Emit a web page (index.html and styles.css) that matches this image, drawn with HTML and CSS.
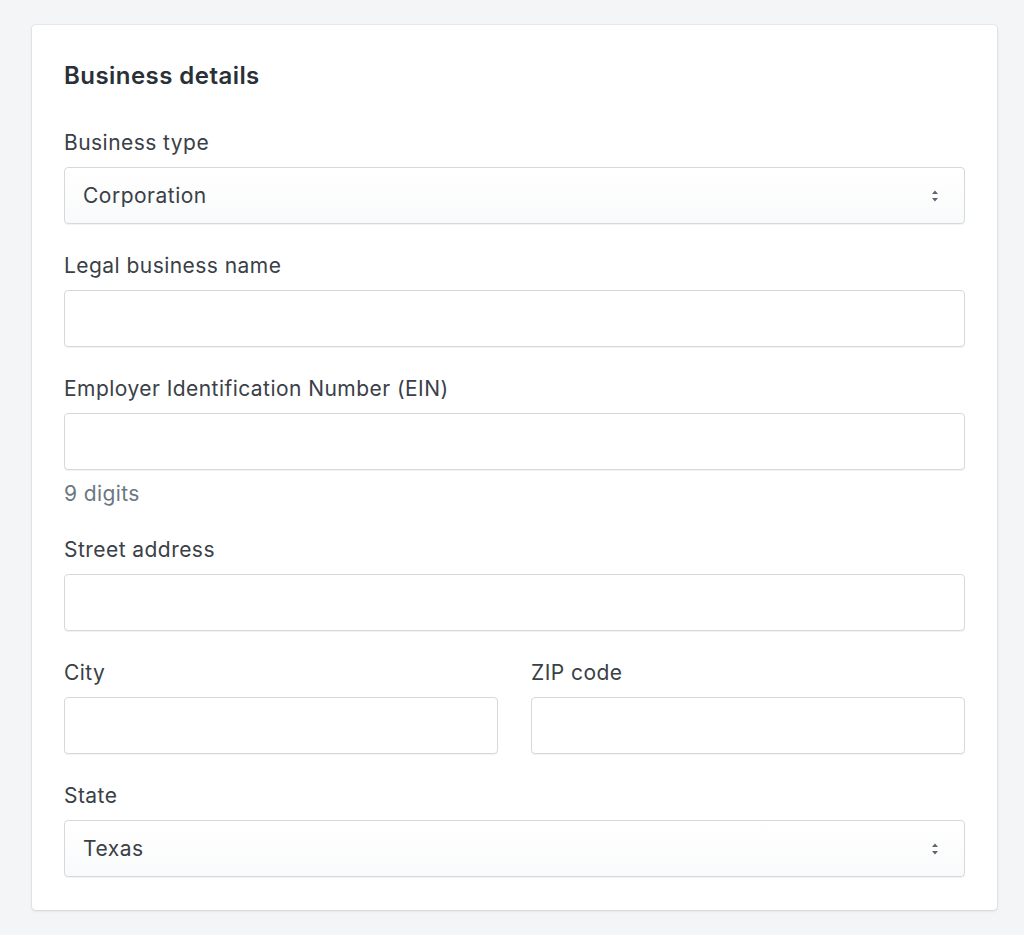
FILE: index.html
```html
<!DOCTYPE html>
<html lang="en">
<head>
    <meta charset="UTF-8">
    <meta name="viewport" content="width=device-width, initial-scale=1.0">
    <title>Business details</title>
    <link rel="stylesheet" href="styles.css">
</head>
<body>
    <div class="card">
        <h2 class="card-title">Business details</h2>

        <div class="field">
            <label class="label">Business type</label>
            <div class="select">
                <span>Corporation</span>
                <svg class="arrows" width="10" height="14" viewBox="0 0 10 14">
                    <path d="M5 1.5 L8 5 H2 Z" fill="#5c6670"/>
                    <path d="M5 12.5 L8 9 H2 Z" fill="#5c6670"/>
                </svg>
            </div>
        </div>

        <div class="field">
            <label class="label">Legal business name</label>
            <div class="input"></div>
        </div>

        <div class="field">
            <label class="label">Employer Identification Number (EIN)</label>
            <div class="input"></div>
            <div class="help">9 digits</div>
        </div>

        <div class="field">
            <label class="label">Street address</label>
            <div class="input"></div>
        </div>

        <div class="row">
            <div class="field">
                <label class="label">City</label>
                <div class="input"></div>
            </div>
            <div class="field">
                <label class="label">ZIP code</label>
                <div class="input"></div>
            </div>
        </div>

        <div class="field">
            <label class="label">State</label>
            <div class="select">
                <span>Texas</span>
                <svg class="arrows" width="10" height="14" viewBox="0 0 10 14">
                    <path d="M5 1.5 L8 5 H2 Z" fill="#5c6670"/>
                    <path d="M5 12.5 L8 9 H2 Z" fill="#5c6670"/>
                </svg>
            </div>
        </div>
    </div>
</body>
</html>
```

FILE: styles.css
```css
body {
    font-family: Inter, "Noto Sans", sans-serif;
    background-color: #f4f5f7;
    color: #212b36;
    margin: 0;
    padding: 25px 27px 25px 32px;
}

.card {
    background-color: #fff;
    border-radius: 4px;
    box-shadow: 0 0 0 1px rgba(63, 63, 68, 0.05), 0 1px 3px rgba(63, 63, 68, 0.15);
    padding: 36px 32px 33px 32px;
}

.card-title {
    margin: 0 0 38px 0;
    font-size: 24px;
    line-height: 30px;
    font-weight: 600;
    letter-spacing: 0.45px;
    color: #2a3038;
}

.field {
    margin-top: 28px;
}

.label {
    display: block;
    font-size: 21px;
    line-height: 28px;
    letter-spacing: 0.45px;
    color: #3a4047;
    margin-bottom: 10px;
}

.input,
.select {
    box-sizing: border-box;
    height: 57px;
    border: 1px solid #d5d9de;
    border-radius: 4px;
    background-color: #fff;
    box-shadow: 0 1px 0 rgba(22, 29, 37, 0.05);
}

.select {
    display: flex;
    align-items: center;
    justify-content: space-between;
    padding: 0 24px 0 18px;
    background: linear-gradient(to bottom, #fff, #f9fafb);
    font-size: 21px;
    letter-spacing: 0.5px;
    color: #3a4047;
}

.help {
    margin-top: 10px;
    font-size: 21px;
    line-height: 28px;
    letter-spacing: 0.4px;
    color: #6b7783;
}

.row {
    display: grid;
    grid-template-columns: 1fr 1fr;
    gap: 33px;
}
```
